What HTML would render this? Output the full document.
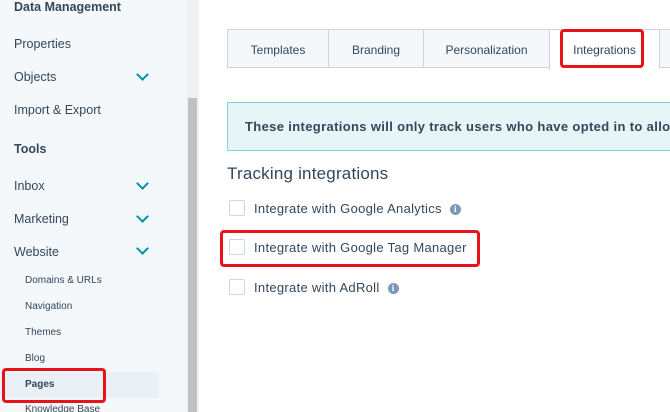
<!DOCTYPE html>
<html><head><style>
html,body{margin:0;width:670px;height:412px;overflow:hidden}
body{position:relative;font-family:"Liberation Sans",sans-serif;background:#fff}
.sb{position:absolute;left:0;top:0;width:186px;height:412px;background:#f5f8fa}
.tr{position:absolute;left:186px;top:0;width:13px;height:412px;background:#f0f0f0}
.th{position:absolute;left:188px;top:98px;width:9px;height:314px;background:#c1c1c1}
.t{position:absolute;color:#33475b;font-size:12.5px;white-space:nowrap}
.b{font-weight:bold}
.s{font-size:10px;left:25px}
.ch{position:absolute;left:138px;width:7px;height:7px;border-right:2px solid #0091ae;border-bottom:2px solid #0091ae;transform:rotate(45deg)}
.red{position:absolute;border:3px solid #e8121a;border-radius:4px}
.tabs{position:absolute;left:227px;top:29px;width:443px;height:41px;overflow:hidden}
.tab{position:absolute;top:0;height:39px;background:#f5f8fa;border:1px solid #cbd6e2;border-right:none;font-size:12px;color:#33475b;text-align:center;line-height:40px;box-sizing:border-box}
.ban{position:absolute;left:227px;top:102px;width:443px;height:49px;background:#e5f5f8;border:1px solid #7fd1de;border-right:none;box-sizing:border-box;font-weight:bold;font-size:13px;letter-spacing:0.35px;color:#33475b;line-height:47px;padding-left:17px;white-space:nowrap;overflow:hidden}
.cb{position:absolute;left:229px;width:14px;height:14px;border:1px solid #cbd6e2;border-radius:2px;background:#fff}
.lb{position:absolute;left:254px;font-size:13px;letter-spacing:0.3px;color:#33475b;white-space:nowrap}
.i{display:inline-block;width:11px;height:11px;border-radius:50%;background:#7c98b6;color:#fff;font-size:9px;font-weight:bold;text-align:center;line-height:11px;font-family:"Liberation Serif",serif;vertical-align:middle;margin-left:8px;letter-spacing:0}
</style></head><body>
<div class="sb"></div><div class="tr"></div><div class="th"></div>
<div class="t b" style="left:14px;top:0px">Data Management</div>
<div class="t" style="left:14px;top:37px">Properties</div>
<div class="t" style="left:14px;top:70px">Objects</div><div class="ch" style="top:70px"></div>
<div class="t" style="left:14px;top:103px">Import &amp; Export</div>
<div class="t b" style="left:14px;top:142px">Tools</div>
<div class="t" style="left:14px;top:179px">Inbox</div><div class="ch" style="top:179px"></div>
<div class="t" style="left:14px;top:212px">Marketing</div><div class="ch" style="top:212px"></div>
<div class="t" style="left:14px;top:245px">Website</div><div class="ch" style="top:244px"></div>
<div class="t s" style="top:275px">Domains &amp; URLs</div>
<div class="t s" style="top:301px">Navigation</div>
<div class="t s" style="top:327px">Themes</div>
<div class="t s" style="top:353px">Blog</div>
<div style="position:absolute;left:0;top:372px;width:159px;height:26px;background:#eaf0f6"></div>
<div class="t s b" style="top:379px">Pages</div>
<div class="t s" style="top:404px">Knowledge Base</div>
<div class="red" style="left:2px;top:368px;width:98px;height:29px"></div>
<div class="tabs">
<div class="tab" style="left:0;width:101px">Templates</div>
<div class="tab" style="left:101px;width:95px">Branding</div>
<div class="tab" style="left:196px;width:126px">Personalization</div>
<div class="tab" style="left:322px;width:110px;background:#fff;height:41px;border-bottom:none">Integrations</div>
<div class="tab" style="left:432px;width:11px"></div>
</div>
<div class="red" style="left:560px;top:29px;width:78px;height:33px"></div>
<div class="ban">These integrations will only track users who have opted in to allow cookies</div>
<div class="t" style="left:227px;top:164px;font-size:17px;letter-spacing:0.2px">Tracking integrations</div>
<div class="cb" style="top:200px"></div><div class="lb" style="top:201px">Integrate with Google Analytics<span class="i">i</span></div>
<div class="cb" style="top:239px"></div><div class="lb" style="top:240px">Integrate with Google Tag Manager</div>
<div class="red" style="left:220px;top:230px;width:254px;height:31px"></div>
<div class="cb" style="top:279px"></div><div class="lb" style="top:280px">Integrate with AdRoll<span class="i">i</span></div>
</body></html>
